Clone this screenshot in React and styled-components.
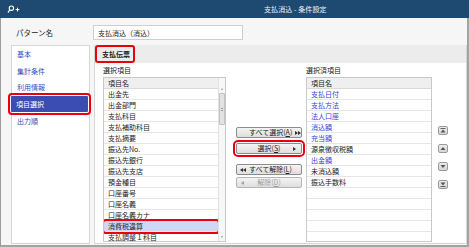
import React from 'react'
import styled, { createGlobalStyle } from 'styled-components'

const GlobalStyle = createGlobalStyle`
  html, body {
    margin: 0;
    padding: 0;
    background: #ffffff;
  }
  body {
    font-family: "Noto Sans CJK JP", "Noto Sans", sans-serif;
    font-size: 7px;
    color: #222;
  }
  * {
    box-sizing: border-box;
  }
`

const Window = styled.div`
  width: 469px;
  height: 247px;
  display: flex;
  flex-direction: column;
  overflow: hidden;
`

const TitleBar = styled.div`
  height: 18px;
  flex: none;
  display: flex;
  align-items: center;
  padding-left: 7px;
  background: #1e4a72;
  color: #f2f5f9;
`

const TitleText = styled.div`
  margin-left: 244px;
  font-size: 7px;
  letter-spacing: 0.1px;
`

const Body = styled.div`
  flex: 1;
  min-height: 0;
  display: flex;
  flex-direction: column;
  padding: 7px 0 1px 10px;
  background: #f6f6f6;
  border-left: 1px solid #9d9d9d;
  border-right: 2px solid #a3a3a3;
  border-bottom: 2px solid #a3a3a3;
`

const PatternRow = styled.div`
  height: 15px;
  margin-bottom: 5px;
  display: flex;
  align-items: center;
`

const PatternLabel = styled.div`
  width: 82px;
  padding-left: 5px;
  font-size: 7.5px;
`

const TextBox = styled.div`
  width: 150px;
  height: 15px;
  padding-left: 4px;
  display: flex;
  align-items: center;
  background: #fff;
  border: 1px solid #cfcfcf;
  font-size: 7px;
`

const Main = styled.div`
  flex: 1;
  min-height: 0;
  display: flex;
  gap: 4px;
`

const Nav = styled.div`
  width: 79px;
  background: #fff;
  border: 1px solid #d6d6d6;
`

const NavItem = styled.div`
  height: 16.6px;
  padding-left: 5px;
  display: flex;
  align-items: center;
  font-size: 7px;
  color: ${p => (p.$active ? '#ffffff' : '#2f4fb8')};
  background: ${p => (p.$active ? '#3b4db3' : 'transparent')};
  ${p =>
    p.$active &&
    `
    margin: 0 1px 0 -1px;
    border-radius: 1px;
    outline: 2.2px solid #e8000f;
    outline-offset: 1.2px;
    position: relative;
  `}
`

const Content = styled.div`
  flex: 1;
  display: flex;
  flex-direction: column;
  background: #fff;
  border: 1px solid #d6d6d6;
  border-top: none;
`

const Heading = styled.div`
  height: 18px;
  flex: none;
  display: flex;
  align-items: center;
  background: #ececec;
`

const HeadingTag = styled.div`
  height: 18px;
  padding: 0 3px 0 5px;
  display: flex;
  align-items: center;
  border: 2px solid #e8000f;
  border-radius: 3px;
  font-weight: bold;
  font-size: 7px;
`

const ContentBody = styled.div`
  flex: 1;
  min-height: 0;
  display: flex;
  padding: 2px 0 0 8px;
`

const Column = styled.div`
  width: ${p => p.$width}px;
  margin-left: ${p => p.$offset || 0}px;
  display: flex;
  flex-direction: column;
`

const ColLabel = styled.div`
  height: 12px;
  line-height: 11px;
  font-size: 7px;
`

const List = styled.div`
  flex: 1;
  min-height: 0;
  margin-bottom: 1px;
  display: flex;
  background: #fff;
  border: 1px solid #c9c9c9;
`

const ListBody = styled.div`
  flex: 1;
  display: flex;
  flex-direction: column;
  overflow: hidden;
`

const HeaderCell = styled.div`
  height: 11px;
  flex: none;
  padding-left: 4px;
  line-height: 10px;
  background: #efefef;
  border-bottom: 1px solid #d9d9d9;
  font-size: 7px;
`

const Row = styled.div`
  height: 11px;
  flex: none;
  padding-left: 4px;
  line-height: 10px;
  border-bottom: 1px solid #e6e6e6;
  font-size: 7px;
  color: ${p => (p.$blue ? '#3341d9' : '#222')};
  ${p =>
    p.$marked &&
    `
    background: #cdd9f4;
    position: relative;
    outline: 2.2px solid #e8000f;
    outline-offset: 0.5px;
    border-radius: 2px;
  `}
`

const Scrollbar = styled.div`
  width: 7px;
  flex: none;
  display: flex;
  flex-direction: column;
  align-items: center;
  background: #f7f7f7;
  border-left: 1px solid #e2e2e2;
  padding-top: 10px;
`

const ScrollArrow = styled.div`
  width: 0;
  height: 0;
  border-left: 1.5px solid transparent;
  border-right: 1.5px solid transparent;
  ${p =>
    p.$down
      ? 'border-top: 2px solid #9a9a9a; margin-top: auto; margin-bottom: 3px;'
      : 'border-bottom: 2px solid #9a9a9a;'}
`

const Thumb = styled.div`
  width: 6px;
  height: 32px;
  margin-top: 3px;
  display: flex;
  align-items: center;
  justify-content: center;
  background: #e2e2e2;
  border: 1px solid #c2c2c2;
  border-radius: 1px;
`

const Grip = styled.div`
  width: 2px;
  height: 3px;
  border-top: 1px solid #9a9a9a;
  border-bottom: 1px solid #9a9a9a;
`

const ButtonStack = styled.div`
  display: flex;
  flex-direction: column;
  gap: ${p => p.$gap}px;
  margin-top: ${p => p.$top}px;
`

const MoveButton = styled.div`
  height: 11px;
  display: grid;
  grid-template-columns: 12px 1fr 12px;
  align-items: center;
  border: 1px solid ${p => (p.$disabled ? '#b5b5b5' : '#8c8c8c')};
  border-radius: 2px;
  background: linear-gradient(#f4f4f4, #dedede);
  color: ${p => (p.$disabled ? '#a0a0a0' : '#222')};
  font-size: 7px;
  line-height: 9px;
  ${p =>
    p.$marked &&
    `
    outline: 2.2px solid #e8000f;
    outline-offset: 1.3px;
    border-radius: 2px;
  `}
`

const ButtonLabel = styled.span`
  grid-column: 2;
  text-align: center;
  white-space: nowrap;
`

const Key = styled.span`
  text-decoration: underline;
  text-underline-offset: 1px;
`

const ArrowSlot = styled.span`
  grid-column: ${p => (p.$left ? 1 : 3)};
  grid-row: 1;
  display: flex;
  justify-content: center;
`

const OrderButton = styled.div`
  width: 10px;
  height: 9px;
  display: flex;
  align-items: center;
  justify-content: center;
  border: 1px solid #9a9a9a;
  border-radius: 2px;
  background: linear-gradient(#ececec, #d6d6d6);
`

const Arrows = ({ count, left, color }) => (
  <svg width={count * 3 + 1} height="4" viewBox={`0 0 ${count * 3 + 1} 4`}>
    {Array.from({ length: count }).map((_, i) =>
      left ? (
        <polygon key={i} points={`${i * 3 + 3},0 ${i * 3 + 3},4 ${i * 3},2`} fill={color} />
      ) : (
        <polygon key={i} points={`${i * 3},0 ${i * 3},4 ${i * 3 + 3},2`} fill={color} />
      )
    )}
  </svg>
)

const OrderIcon = ({ kind }) => (
  <svg width="6" height="5" viewBox="0 0 6 5">
    {kind === 'top' && (
      <>
        <rect x="0.5" y="0" width="5" height="0.9" fill="#555" />
        <polygon points="3,1.6 5.5,4.6 0.5,4.6" fill="#555" />
      </>
    )}
    {kind === 'up' && <polygon points="3,1 5.5,4 0.5,4" fill="#555" />}
    {kind === 'down' && <polygon points="0.5,1 5.5,1 3,4" fill="#555" />}
    {kind === 'bottom' && (
      <>
        <polygon points="0.5,0.4 5.5,0.4 3,3.4" fill="#555" />
        <rect x="0.5" y="4.1" width="5" height="0.9" fill="#555" />
      </>
    )}
  </svg>
)

const TitleIcon = () => (
  <svg width="13" height="8" viewBox="0 0 13 8">
    <circle cx="4.4" cy="3.2" r="2.2" fill="none" stroke="#fff" strokeWidth="1.1" />
    <line x1="2.8" y1="4.8" x2="1" y2="7.6" stroke="#fff" strokeWidth="1.2" />
    <line x1="8.6" y1="4.6" x2="12.4" y2="4.6" stroke="#fff" strokeWidth="1" />
    <line x1="10.5" y1="2.7" x2="10.5" y2="6.5" stroke="#fff" strokeWidth="1" />
  </svg>
)

const navItems = ['基本', '集計条件', '利用情報', '項目選択', '出力順']

const available = [
  '出金先',
  '出金部門',
  '支払科目',
  '支払補助科目',
  '支払摘要',
  '振込先No.',
  '振込先銀行',
  '振込先支店',
  '預金種目',
  '口座番号',
  '口座名義',
  '口座名義カナ',
  '消費税違算',
  '支払調整１科目',
]

const selected = [
  { name: '支払日付', blue: true },
  { name: '支払方法', blue: true },
  { name: '法人口座', blue: true },
  { name: '消込額', blue: true },
  { name: '充当額', blue: true },
  { name: '源泉徴収税額' },
  { name: '出金額', blue: true },
  { name: '未消込額' },
  { name: '振込手数料' },
  { name: '' },
  { name: '' },
  { name: '' },
  { name: '' },
  { name: '' },
  { name: '' },
]

export default function App() {
  return (
    <>
      <GlobalStyle />
      <Window>
        <TitleBar>
          <TitleIcon />
          <TitleText>支払消込 - 条件設定</TitleText>
        </TitleBar>
        <Body>
          <PatternRow>
            <PatternLabel>パターン名</PatternLabel>
            <TextBox>支払消込（消込）</TextBox>
          </PatternRow>
          <Main>
            <Nav>
              {navItems.map(item => (
                <NavItem key={item} $active={item === '項目選択'}>
                  {item}
                </NavItem>
              ))}
            </Nav>
            <Content>
              <Heading>
                <HeadingTag>支払伝票</HeadingTag>
              </Heading>
              <ContentBody>
                <Column $width={123}>
                  <ColLabel>選択項目</ColLabel>
                  <List>
                    <ListBody>
                      <HeaderCell>項目名</HeaderCell>
                      {available.map(name => (
                        <Row key={name} $marked={name === '消費税違算'}>
                          {name}
                        </Row>
                      ))}
                    </ListBody>
                    <Scrollbar>
                      <ScrollArrow />
                      <Thumb>
                        <Grip />
                      </Thumb>
                      <ScrollArrow $down />
                    </Scrollbar>
                  </List>
                </Column>

                <Column $width={66} $offset={10}>
                  <ButtonStack $gap={5} $top={62}>
                    <MoveButton>
                      <ButtonLabel>
                        すべて選択(<Key>A</Key>)
                      </ButtonLabel>
                      <ArrowSlot>
                        <Arrows count={2} color="#333" />
                      </ArrowSlot>
                    </MoveButton>
                    <MoveButton $marked>
                      <ButtonLabel>
                        選択(<Key>S</Key>)
                      </ButtonLabel>
                      <ArrowSlot>
                        <Arrows count={1} color="#333" />
                      </ArrowSlot>
                    </MoveButton>
                  </ButtonStack>
                  <ButtonStack $gap={2} $top={10}>
                    <MoveButton>
                      <ArrowSlot $left>
                        <Arrows count={2} left color="#333" />
                      </ArrowSlot>
                      <ButtonLabel>
                        すべて解除(<Key>L</Key>)
                      </ButtonLabel>
                    </MoveButton>
                    <MoveButton $disabled>
                      <ArrowSlot $left>
                        <Arrows count={1} left color="#a0a0a0" />
                      </ArrowSlot>
                      <ButtonLabel>
                        解除(<Key>D</Key>)
                      </ButtonLabel>
                    </MoveButton>
                  </ButtonStack>
                </Column>

                <Column $width={126} $offset={4}>
                  <ColLabel>選択済項目</ColLabel>
                  <List>
                    <ListBody>
                      <HeaderCell>項目名</HeaderCell>
                      {selected.map((item, i) => (
                        <Row key={i} $blue={item.blue}>
                          {item.name}
                        </Row>
                      ))}
                    </ListBody>
                  </List>
                </Column>

                <Column $width={10} $offset={6}>
                  <ButtonStack $gap={9} $top={61}>
                    <OrderButton>
                      <OrderIcon kind="top" />
                    </OrderButton>
                    <OrderButton>
                      <OrderIcon kind="up" />
                    </OrderButton>
                    <OrderButton>
                      <OrderIcon kind="down" />
                    </OrderButton>
                    <OrderButton>
                      <OrderIcon kind="bottom" />
                    </OrderButton>
                  </ButtonStack>
                </Column>
              </ContentBody>
            </Content>
          </Main>
        </Body>
      </Window>
    </>
  )
}
